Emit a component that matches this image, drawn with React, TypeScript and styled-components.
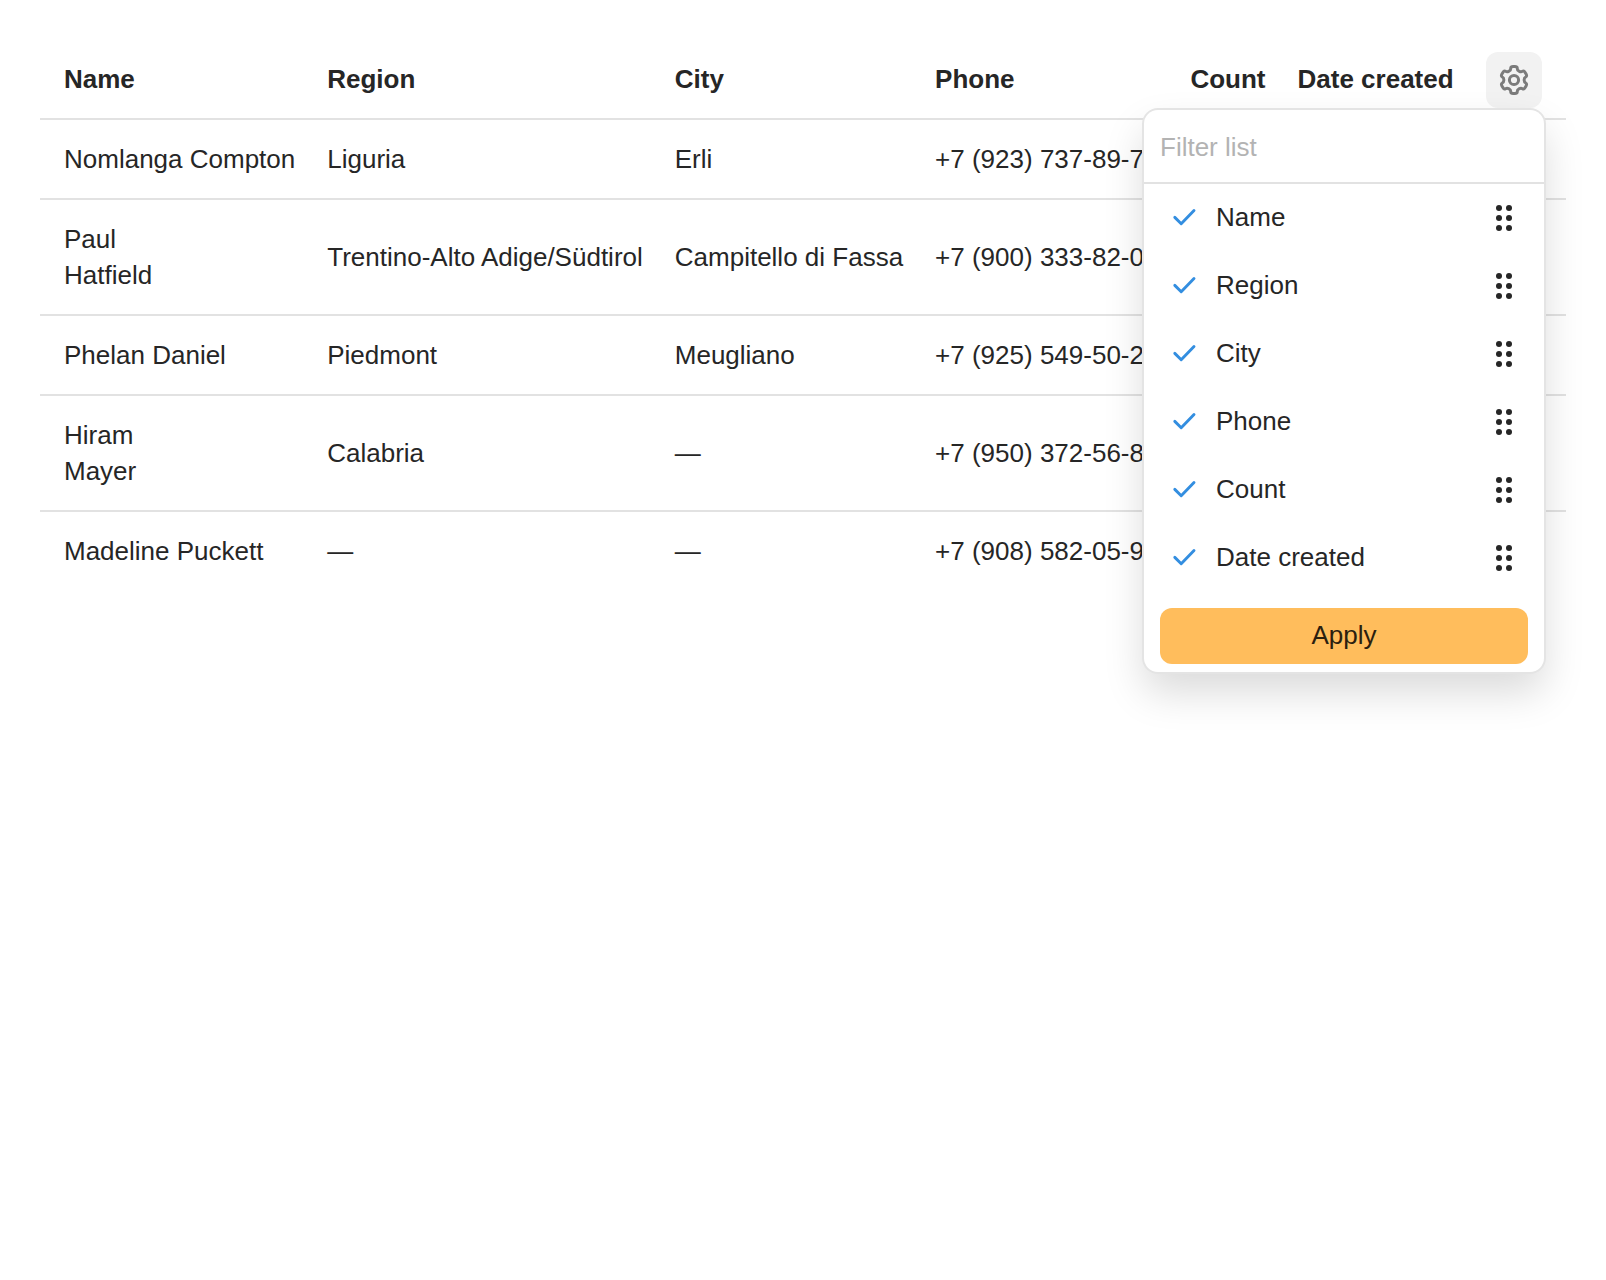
import React from 'react';
import styled, { createGlobalStyle } from 'styled-components';

const GlobalStyle = createGlobalStyle`
  *, *::before, *::after { box-sizing: border-box; }
  body {
    margin: 0;
    background: #fff;
    color: #262626;
    font-family: "Liberation Sans", Arial, sans-serif;
    font-size: 26px;
    line-height: 36px;
  }
`;

const Page = styled.main`
  min-height: 1280px;
  padding: 40px;
  overflow: hidden;
`;

const Table = styled.div`
  display: grid;
  grid-template-columns: repeat(5, max-content) minmax(0, 1fr) 96px;
`;

const Row = styled.div`
  display: grid;
  grid-column: 1 / -1;
  grid-template-columns: subgrid;
  align-items: center;
  min-height: 80px;
  padding: 21px 0;
  border-bottom: 2px solid #e2e2e2;

  &:last-child {
    border-bottom-color: transparent;
  }
`;

const HeadRow = styled(Row)`
  height: 80px;
  padding: 0;
  font-weight: 700;
`;

const Cell = styled.div`
  padding: 0 16px;
  white-space: pre;

  &:first-child {
    padding-left: 24px;
  }
`;

const Settings = styled.div`
  position: relative;
  width: 56px;
  height: 56px;
  margin: 2px 0 0 16px;
  font-weight: 400;
`;

const SettingsButton = styled.button`
  display: flex;
  align-items: center;
  justify-content: center;
  width: 56px;
  height: 56px;
  padding: 0;
  border: 0;
  border-radius: 12px;
  background: #f2f2f2;
  color: #7b7b7b;
`;

const Dropdown = styled.section`
  position: absolute;
  z-index: 1;
  top: 58px;
  right: -2px;
  width: 400px;
  height: 562px;
  border-radius: 14px;
  background: #fff;
  box-shadow: 0 0 0 2px #e4e4e4, 0 20px 40px rgba(0, 0, 0, 0.15);
`;

const FilterInput = styled.input`
  display: block;
  width: 100%;
  height: 74px;
  padding: 2px 16px 0;
  border: 0;
  border-bottom: 2px solid #e2e2e2;
  outline: none;
  background: transparent;
  font: inherit;

  &::placeholder {
    color: #b3b3b3;
    opacity: 1;
  }
`;

const Options = styled.ul`
  margin: 0;
  padding: 0;
  list-style: none;
`;

const Option = styled.li`
  display: flex;
  align-items: center;
  height: 68px;
  padding: 0 32px 0 28px;
`;

const OptionLabel = styled.span`
  flex: 1;
  margin: -2px 0 0 18px;
`;

const ApplyButton = styled.button`
  display: block;
  width: 368px;
  height: 56px;
  margin: 16px 16px 8px;
  padding: 0 0 2px;
  border: 0;
  border-radius: 12px;
  background: #ffbd5c;
  color: #2b200f;
  font: inherit;
`;

const columns = ['Name', 'Region', 'City', 'Phone', 'Count', 'Date created'];

const people = [
  { name: 'Nomlanga Compton', region: 'Liguria', city: 'Erli', phone: '+7 (923) 737-89-70' },
  { name: 'Paul\nHatfield', region: 'Trentino-Alto Adige/Südtirol', city: 'Campitello di Fassa', phone: '+7 (900) 333-82-02' },
  { name: 'Phelan Daniel', region: 'Piedmont', city: 'Meugliano', phone: '+7 (925) 549-50-23' },
  { name: 'Hiram\nMayer', region: 'Calabria', city: '—', phone: '+7 (950) 372-56-84' },
  { name: 'Madeline Puckett', region: '—', city: '—', phone: '+7 (908) 582-05-94' },
];

/** Builds a closed outline with six teeth, rounding every corner. */
function gearPath(): string {
  const profile = [
    { angle: -14, radius: 13.8, round: 2.4 },
    { angle: 14, radius: 13.8, round: 2.4 },
    { angle: 18, radius: 10.4, round: 1.8 },
    { angle: 42, radius: 10.4, round: 1.8 },
  ];
  const points = Array.from({ length: 6 }).flatMap((_, tooth) =>
    profile.map(({ angle, radius, round }) => {
      const a = ((angle + tooth * 60) * Math.PI) / 180;
      return { x: 15 + radius * Math.sin(a), y: 15 - radius * Math.cos(a), round };
    }),
  );
  const f = (n: number) => n.toFixed(2);
  return (
    points
      .map((p, i) => {
        const prev = points[(i + points.length - 1) % points.length];
        const next = points[(i + 1) % points.length];
        const toward = (q: { x: number; y: number }) => {
          const length = Math.hypot(q.x - p.x, q.y - p.y);
          const t = Math.min(p.round, length / 2) / length;
          return `${f(p.x + (q.x - p.x) * t)} ${f(p.y + (q.y - p.y) * t)}`;
        };
        return `${i ? 'L' : 'M'}${toward(prev)}Q${f(p.x)} ${f(p.y)} ${toward(next)}`;
      })
      .join('') + 'Z'
  );
}

const GearIcon = () => (
  <svg width="30" height="30" viewBox="0 0 30 30" fill="none" stroke="currentColor" strokeWidth="3">
    <path d={gearPath()} strokeLinejoin="round" />
    <circle cx="15" cy="15" r="4.6" />
  </svg>
);

const CheckIcon = () => (
  <svg width="26" height="20" viewBox="0 0 26 20" fill="none">
    <path d="M2.8 9.4L9.2 15.8L22 2.5" stroke="#338ee0" strokeWidth="2.9" strokeLinecap="round" strokeLinejoin="round" />
  </svg>
);

const DragIcon = () => (
  <svg width="16" height="26" viewBox="0 0 16 26" fill="#262626">
    {[3, 13, 23].flatMap((y) => [3, 13].map((x) => <circle key={`${x}-${y}`} cx={x} cy={y} r="3" />))}
  </svg>
);

export default function App() {
  return (
    <Page>
      <GlobalStyle />
      <Table>
        <HeadRow>
          {columns.map((column) => (
            <Cell key={column}>{column}</Cell>
          ))}
          <Settings>
            <SettingsButton aria-label="Settings">
              <GearIcon />
            </SettingsButton>
            <Dropdown>
              <FilterInput placeholder="Filter list" />
              <Options>
                {columns.map((column) => (
                  <Option key={column}>
                    <CheckIcon />
                    <OptionLabel>{column}</OptionLabel>
                    <DragIcon />
                  </Option>
                ))}
              </Options>
              <ApplyButton>Apply</ApplyButton>
            </Dropdown>
          </Settings>
        </HeadRow>
        {people.map((person) => (
          <Row key={person.name}>
            <Cell>{person.name}</Cell>
            <Cell>{person.region}</Cell>
            <Cell>{person.city}</Cell>
            <Cell>{person.phone}</Cell>
          </Row>
        ))}
      </Table>
    </Page>
  );
}
